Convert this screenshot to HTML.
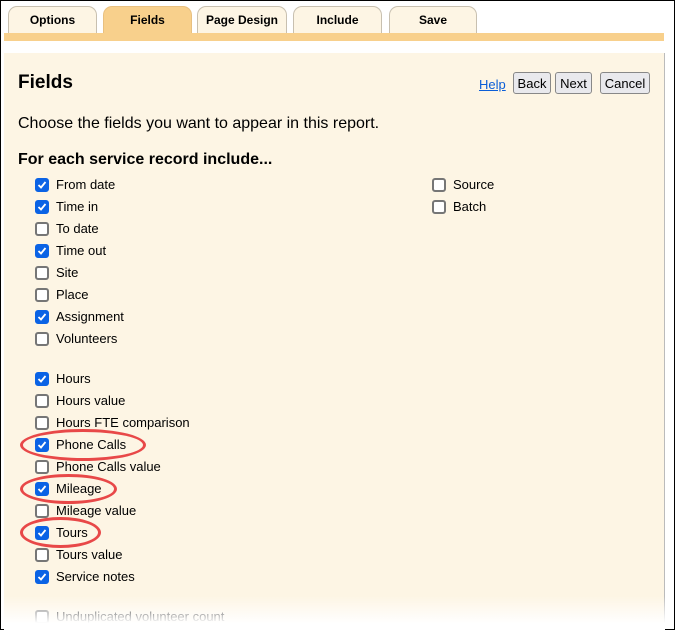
<!DOCTYPE html>
<html><head><style>
body{margin:0;width:675px;height:630px;overflow:hidden;background:#fff;font-family:"Liberation Sans",Arial,sans-serif;position:relative}
.frame{position:absolute;left:0;top:0;width:673px;height:628px;border:1px solid #000;border-right:2px solid #000;box-sizing:content-box}
.tab{position:absolute;top:6px;height:27px;background:#fdf5e4;border:1px solid #c8c0b0;border-bottom:none;border-radius:9px 9px 0 0;box-sizing:border-box;font-size:12px;font-weight:bold;text-align:center;line-height:26px;color:#000}
.tab.on{background:#f8d08c;border-color:#e8c080}
.bar{position:absolute;left:4px;top:33px;width:660px;height:8px;background:#f8d08c}
.panel{position:absolute;left:4px;top:53px;width:660px;height:577px;background:#fdf5e4;border-right:1px solid #bbb}
.fade{position:absolute;left:4px;top:596px;width:661px;height:34px;background:linear-gradient(rgba(255,255,255,0),#fff 80%)}
h1{position:absolute;left:18px;top:72px;margin:0;font-size:19px;font-weight:bold}
.t{position:absolute;font-size:16px;color:#000}
.btn{position:absolute;top:72px;height:22px;border:1px solid #888;border-radius:3px;background:#e9e9ed;font-size:13px;line-height:21px;text-align:center;box-sizing:border-box}
.row{position:absolute;font-size:13px;height:16px;line-height:16px}
.cb{position:absolute;left:0;top:1px;width:14px;height:14px;box-sizing:border-box;border:2px solid #767676;border-radius:3px;background:#fff}
.cb.c{background:#0b63e5;border-color:#0b63e5}
.cb.c svg{position:absolute;left:0;top:0}
.row span{position:absolute;left:21px;white-space:nowrap}
.oval{position:absolute;border:3px solid #e84848;border-radius:50%;box-sizing:border-box}
</style></head><body>
<div class="frame"></div>
<div class="tab" style="left:8px;width:89px">Options</div>
<div class="tab on" style="left:103px;width:89px">Fields</div>
<div class="tab" style="left:197px;width:90px">Page Design</div>
<div class="tab" style="left:293px;width:89px">Include</div>
<div class="tab" style="left:389px;width:88px">Save</div>
<div class="bar"></div>
<div class="panel"></div>
<h1>Fields</h1>
<a style="position:absolute;left:479px;top:77px;font-size:13px;color:#0b5ed7;text-decoration:underline">Help</a>
<div class="btn" style="left:513px;width:38px">Back</div>
<div class="btn" style="left:555px;width:37px">Next</div>
<div class="btn" style="left:600px;width:50px">Cancel</div>
<div class="t" style="left:18px;top:115px">Choose the fields you want to appear in this report.</div>
<div class="t" style="left:18px;top:151px;font-weight:bold">For each service record include...</div>
<div id="rows"></div>
<div class="oval" style="left:20px;top:429px;width:126px;height:32px"></div>
<div class="oval" style="left:20px;top:474px;width:97px;height:30px"></div>
<div class="oval" style="left:20px;top:517px;width:81px;height:31px"></div>
<div class="fade"></div>
<script>
var R=[[35,177,1,"From date"],[35,199,1,"Time in"],[35,221,0,"To date"],[35,243,1,"Time out"],[35,265,0,"Site"],[35,287,0,"Place"],[35,309,1,"Assignment"],[35,331,0,"Volunteers"],
[35,371,1,"Hours"],[35,393,0,"Hours value"],[35,415,0,"Hours FTE comparison"],[35,437,1,"Phone Calls"],[35,459,0,"Phone Calls value"],[35,481,1,"Mileage"],[35,503,0,"Mileage value"],[35,525,1,"Tours"],[35,547,0,"Tours value"],[35,569,1,"Service notes"],[35,609,0,"Unduplicated volunteer count"],
[432,177,0,"Source"],[432,199,0,"Batch"]];
var h="";R.forEach(function(r){h+='<div class="row" style="left:'+r[0]+'px;top:'+r[1]+'px"><div class="cb'+(r[2]?' c':'')+'">'+(r[2]?'<svg width="10" height="10" viewBox="0 0 10 10"><path d="M1.5 5L4 7.5L8.5 2" stroke="#fff" stroke-width="1.8" fill="none"/></svg>':'')+'</div><span>'+r[3]+'</span></div>'});
document.getElementById("rows").innerHTML=h;
</script>
</body></html>
